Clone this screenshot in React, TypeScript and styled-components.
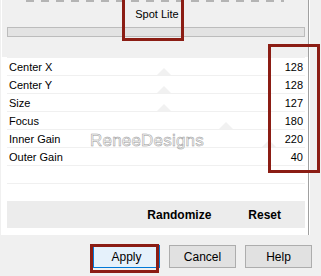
import React from "react";
import styled, { createGlobalStyle } from "styled-components";

const rows = [
  { label: "Center X", value: 128, thumb: 150 },
  { label: "Center Y", value: 128, thumb: 150 },
  { label: "Size", value: 127, thumb: 150 },
  { label: "Focus", value: 180, thumb: 212 },
  { label: "Inner Gain", value: 220, thumb: 255 },
  { label: "Outer Gain", value: 40, thumb: -1 },
];

const App = () => {
  return (
    <>
      <GlobalStyle />
      <Dialog>
        <Panel>
          <Dashes />
          <Title>Spot Lite</Title>
          <Slider />
          <Gap />
          <Sheet>
            <List>
              {rows.map((r) => (
                <Row key={r.label}>
                  <Label>{r.label}</Label>
                  <Value>{r.value}</Value>
                  {r.thumb > 0 && <Thumb $left={r.thumb} />}
                </Row>
              ))}
              <Row />
            </List>
            <Spacer />
            <ActionBar>
              <BarLink>Randomize</BarLink>
              <BarLink>Reset</BarLink>
            </ActionBar>
            <Watermark>ReneeDesigns</Watermark>
          </Sheet>
        </Panel>
        <Footer>
          <Button $primary>Apply</Button>
          <Button>Cancel</Button>
          <Button>Help</Button>
        </Footer>
        <Mark $x={122} $y={-3} $w={62} $h={44} />
        <Mark $x={268} $y={44} $w={52} $h={129} />
        <Mark $x={90} $y={244} $w={69} $h={29} />
      </Dialog>
    </>
  );
};

export default App;

const GlobalStyle = createGlobalStyle`
  html, body {
    margin: 0;
    padding: 0;
    background: #f0f0f0;
  }
  body {
    font-family: "Liberation Sans", Arial, sans-serif;
    font-size: 11px;
    color: #000;
  }
`;

const Dialog = styled.div`
  position: relative;
  width: 321px;
  height: 276px;
  overflow: hidden;
  background: #f0f0f0;
`;

const Panel = styled.div`
  margin-left: 1px;
  width: 306px;
  height: 235px;
  border-left: 1px solid #ffffff;
  border-right: 1px solid #a0a0a0;
  box-shadow: 1px 0 0 #ffffff;
  display: flex;
  flex-direction: column;
`;

const Dashes = styled.div`
  height: 2px;
  margin: 0 24px;
  background: repeating-linear-gradient(
    to right,
    #b4b4b4 0 8px,
    transparent 8px 15px
  );
`;

const Title = styled.div`
  height: 25px;
  line-height: 25px;
  text-align: center;
  padding-left: 4px;
`;

const Slider = styled.div`
  height: 8px;
  margin: 0 3px 0 5px;
  background: #e3e3e3;
  border: 1px solid #bcbcbc;
`;

const Gap = styled.div`
  height: 20px;
`;

const Sheet = styled.div`
  position: relative;
  flex: 1;
  background: #ffffff;
  display: flex;
  flex-direction: column;
`;

const List = styled.div`
  display: flex;
  flex-direction: column;
  margin: 0 3px 0 5px;
`;

const Row = styled.div`
  position: relative;
  height: 17px;
  border-top: 1px solid #f0f0f0;
  display: flex;
  align-items: center;
  justify-content: space-between;
  &:last-child {
    border-bottom: 1px solid #f0f0f0;
  }
`;

const Label = styled.span`
  padding-left: 2px;
  position: relative;
  z-index: 1;
`;

const Value = styled.span`
  padding-right: 2px;
  position: relative;
  z-index: 1;
`;

const Thumb = styled.span<{ $left: number }>`
  position: absolute;
  left: ${(p) => p.$left}px;
  bottom: 0;
  width: 0;
  height: 0;
  border-left: 7px solid transparent;
  border-right: 7px solid transparent;
  border-bottom: 7px solid #f1f1f1;
`;

const Spacer = styled.div`
  height: 17px;
`;

const ActionBar = styled.div`
  height: 27px;
  margin: 0 3px 0 5px;
  background: #ececec;
  display: flex;
  align-items: center;
  justify-content: flex-end;
  gap: 37px;
  padding-right: 24px;
  font-weight: bold;
  font-size: 12px;
`;

const BarLink = styled.span``;

const Watermark = styled.span`
  position: absolute;
  left: 88px;
  top: 74px;
  font-size: 17px;
  color: #f6f6f6;
  -webkit-text-stroke: 0.5px #9a9a9a;
  letter-spacing: 0.2px;
  pointer-events: none;
`;

const Footer = styled.div`
  display: flex;
  justify-content: flex-end;
  gap: 9px;
  padding: 10px 9px 0 0;
`;

const Button = styled.button<{ $primary?: boolean }>`
  width: 67px;
  height: 23px;
  font-family: "Liberation Sans", Arial, sans-serif;
  font-size: 12px;
  color: #000;
  background: ${(p) => (p.$primary ? "#e5f1fb" : "#e1e1e1")};
  border: 1px solid ${(p) => (p.$primary ? "#0078d7" : "#adadad")};
  padding: 0;
`;

const Mark = styled.div<{ $x: number; $y: number; $w: number; $h: number }>`
  position: absolute;
  left: ${(p) => p.$x}px;
  top: ${(p) => p.$y}px;
  width: ${(p) => p.$w}px;
  height: ${(p) => p.$h}px;
  box-sizing: border-box;
  border: 3px solid #8b1d14;
  pointer-events: none;
`;
